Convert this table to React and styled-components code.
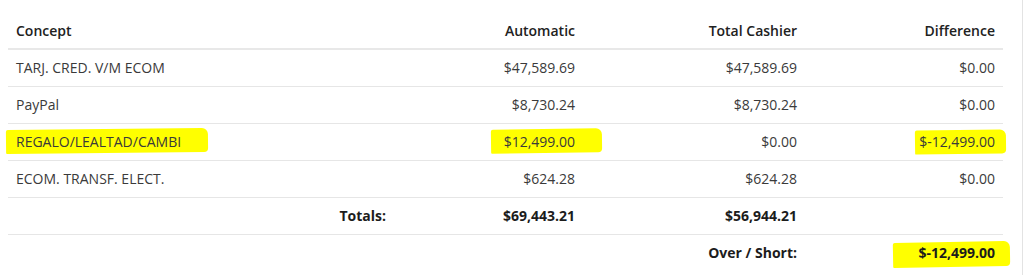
import React from "react";
import styled, { createGlobalStyle } from "styled-components";

const Global = createGlobalStyle`
  html, body { margin: 0; padding: 0; background: #fff; }
  body { font-family: "Open Sans", "Liberation Sans", sans-serif; }
`;

const Page = styled.div`
  width: 1023px;
  height: 275px;
  box-sizing: border-box;
  padding: 14px 0 0 8px;
  border-right: 1px solid #e3e3e3;
`;

const Table = styled.table`
  width: 995px;
  border-collapse: collapse;
  table-layout: fixed;
  font-size: 14px;
  line-height: 20px;
  color: #3a3a3a;
`;

const HeadCell = styled.th`
  padding: 7px 8px;
  font-weight: 600;
  color: #212121;
  text-align: ${(p) => (p.$align === "left" ? "left" : "right")};
  border-bottom: 2px solid #e8e8e8;
`;

const Row = styled.tr`
  border-bottom: ${(p) => (p.$last ? "none" : "1px solid #e6e6e6")};
`;

const Cell = styled.td`
  height: 36px;
  box-sizing: border-box;
  padding: 8px 8px;
  text-align: ${(p) => (p.$align === "left" ? "left" : "right")};
  font-weight: ${(p) => (p.$bold ? 700 : 400)};
  color: ${(p) => (p.$bold ? "#1c1c1c" : "#3a3a3a")};
  white-space: nowrap;
`;

const Highlight = styled.span`
  position: relative;
  display: inline-block;
  z-index: 0;
  &::before {
    content: "";
    position: absolute;
    z-index: -1;
    left: ${(p) => -p.$l}px;
    right: ${(p) => -p.$r}px;
    top: ${(p) => p.$t}px;
    bottom: ${(p) => p.$b}px;
    background: #ffff00;
    border-radius: 2px 6px 4px 1px;
    transform: rotate(${(p) => p.$rot || 0}deg);
  }
`;

const rows = [
  { concept: "TARJ. CRED. V/M ECOM", auto: "$47,589.69", cashier: "$47,589.69", diff: "$0.00" },
  { concept: "PayPal", auto: "$8,730.24", cashier: "$8,730.24", diff: "$0.00" },
  { concept: "REGALO/LEALTAD/CAMBI", auto: "$12,499.00", cashier: "$0.00", diff: "$-12,499.00", hl: true },
  { concept: "ECOM. TRANSF. ELECT.", auto: "$624.28", cashier: "$624.28", diff: "$0.00" },
];

export default function App() {
  return (
    <>
      <Global />
      <Page>
        <Table>
          <colgroup>
            <col style={{ width: 386 }} />
            <col style={{ width: 189 }} />
            <col style={{ width: 222 }} />
            <col style={{ width: 198 }} />
          </colgroup>
          <thead>
            <tr>
              <HeadCell $align="left">Concept</HeadCell>
              <HeadCell>Automatic</HeadCell>
              <HeadCell>Total Cashier</HeadCell>
              <HeadCell>Difference</HeadCell>
            </tr>
          </thead>
          <tbody>
            {rows.map((r) => (
              <Row key={r.concept}>
                <Cell $align="left">
                  {r.hl ? (
                    <Highlight $l={10} $r={27} $t={-3} $b={-1} $rot={-0.6}>{r.concept}</Highlight>
                  ) : (
                    r.concept
                  )}
                </Cell>
                <Cell>
                  {r.hl ? (
                    <Highlight $l={13} $r={27} $t={-3} $b={-1} $rot={-0.8}>{r.auto}</Highlight>
                  ) : (
                    r.auto
                  )}
                </Cell>
                <Cell>{r.cashier}</Cell>
                <Cell>
                  {r.hl ? (
                    <Highlight $l={4} $r={11} $t={-2} $b={-2} $rot={-0.8}>{r.diff}</Highlight>
                  ) : (
                    r.diff
                  )}
                </Cell>
              </Row>
            ))}
            <Row>
              <Cell $bold>Totals:</Cell>
              <Cell $bold>$69,443.21</Cell>
              <Cell $bold>$56,944.21</Cell>
              <Cell />
            </Row>
            <Row $last>
              <Cell />
              <Cell />
              <Cell $bold>Over / Short:</Cell>
              <Cell $bold>
                <Highlight $l={25} $r={15} $t={-1} $b={-4} $rot={-1}>$-12,499.00</Highlight>
              </Cell>
            </Row>
          </tbody>
        </Table>
      </Page>
    </>
  );
}
